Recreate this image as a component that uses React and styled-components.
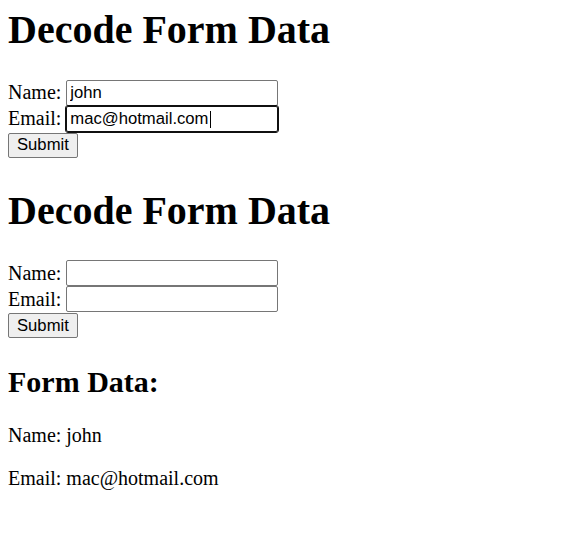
import React from 'react';
import styled, { createGlobalStyle } from 'styled-components';

const GlobalStyle = createGlobalStyle`
  body {
    margin: 8px;
    background: #fff;
    color: #000;
    font-family: "Liberation Serif", "Times New Roman", serif;
    font-size: 20px;
  }
`;

const Title = styled.h1`
  font-size: 40px;
  font-weight: 700;
  margin: ${(p) => (p.$first ? '-2px' : '28.8px')} 0 26.8px;
`;

const SubTitle = styled.h2`
  font-size: 30px;
  font-weight: 700;
  margin: 27px 0 25px;
`;

const Row = styled.div`
  display: flex;
  align-items: center;
  height: 26px;
`;

const Label = styled.label`
  white-space: pre;
`;

const Field = styled.span`
  position: relative;
  display: inline-flex;
`;

const Input = styled.input`
  box-sizing: border-box;
  width: 212px;
  height: 26px;
  padding: 1px 3px;
  margin: 0;
  font-family: "Liberation Sans", Arial, sans-serif;
  font-size: 16.67px;
  color: #000;
  background: #fff;
  border: 1px solid ${(p) => (p.$focused ? '#101010' : '#767676')};
  border-radius: 2px;
  outline: ${(p) => (p.$focused ? '1px solid #101010' : 'none')};
  outline-offset: 0;
`;

const Caret = styled.span`
  position: absolute;
  left: 144px;
  top: 5px;
  width: 1px;
  height: 17px;
  background: #000;
`;

const Button = styled.button`
  box-sizing: border-box;
  height: 25px;
  padding: 1px 8px;
  margin: 1px 0 0;
  font-family: "Liberation Sans", Arial, sans-serif;
  font-size: 16.67px;
  color: #000;
  background: #efefef;
  border: 1px solid #767676;
  border-radius: 2px;
`;

const Text = styled.p`
  margin: 20px 0;
`;

const DecodeForm = ({ first, name, email, focused }) => (
  <form onSubmit={(e) => e.preventDefault()}>
    <Title $first={first}>Decode Form Data</Title>
    <Row>
      <Label>Name: </Label>
      <Input type="text" defaultValue={name} />
    </Row>
    <Row>
      <Label>Email: </Label>
      <Field>
        <Input type="email" defaultValue={email} $focused={focused} />
        {focused && <Caret />}
      </Field>
    </Row>
    <Button type="submit">Submit</Button>
  </form>
);

const App = () => (
  <>
    <GlobalStyle />
    <DecodeForm first name="john" email="mac@hotmail.com" focused />
    <DecodeForm />
    <SubTitle>Form Data:</SubTitle>
    <Text>Name: john</Text>
    <Text>Email: mac@hotmail.com</Text>
  </>
);

export default App;
